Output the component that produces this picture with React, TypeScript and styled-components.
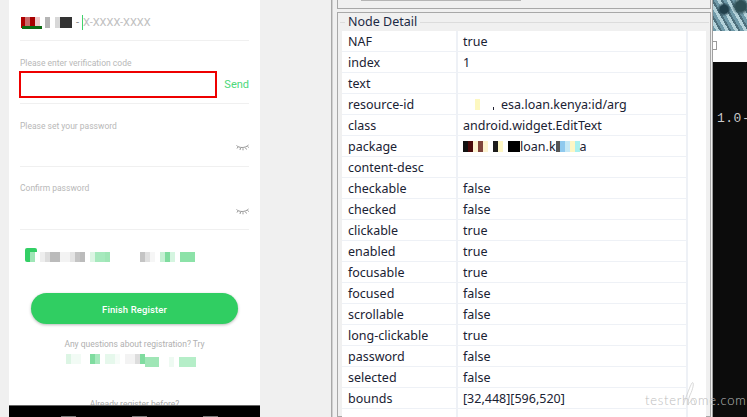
import styled, { createGlobalStyle } from "styled-components";

const GlobalStyle = createGlobalStyle`
  html, body { margin: 0; padding: 0; background: #f0f0f0; overflow: hidden; }
  * { box-sizing: border-box; }
`;

const rows: [string, string][] = [
  ["NAF", "true"],
  ["index", "1"],
  ["text", ""],
  ["resource-id", "esa.loan.kenya:id/arg"],
  ["class", "android.widget.EditText"],
  ["package", ""],
  ["content-desc", ""],
  ["checkable", "false"],
  ["checked", "false"],
  ["clickable", "true"],
  ["enabled", "true"],
  ["focusable", "true"],
  ["focused", "false"],
  ["scrollable", "false"],
  ["long-clickable", "true"],
  ["password", "false"],
  ["selected", "false"],
  ["bounds", "[32,448][596,520]"],
  ["", ""],
];

type Tile = [number, string];

const phoneTiles: Tile[] = [
  [4, "#b00000"], [5, "#c96a6a"], [5, "#a80000"], [5, "#efcaca"], [5, "#fff"], [5, "#b5b5b5"],
  [5, "#fff"], [5, "#d8d8d8"], [12, "#333"],
];
const policyTiles: Tile[] = [
  [5, "#9fe6b6"], [5, "#fff"], [5, "#eee"], [5, "#ddd"], [10, "#bbb"], [10, "#f3f3f3"], [5, "#e4e4e4"], [5, "#c4c4c4"],
  [5, "#bbb"], [5, "#fff"], [5, "#dcf5e4"], [10, "#a6e9bd"], [5, "#9fe6b6"], [30, "#fff"], [5, "#c4c4c4"], [5, "#e0e0e0"],
  [5, "#f6f6f6"], [5, "#fff"], [5, "#c5f0d4"], [5, "#7fdc9f"], [5, "#d5f5e0"], [5, "#fff"], [15, "#8ce2a8"],
];
const tryTiles: Tile[] = [
  [5, "#dcf5e4"], [5, "#f2fbf5"], [5, "#f2fbf5"], [9, "#fff"], [5, "#7fdc9f"], [5, "#a6e9bd"], [5, "#fff"], [10, "#e6f8ec"],
  [5, "#f6fcf8"], [5, "#fff"], [10, "#f3f3f3"], [5, "#ddd"], [5, "#7fdc9f"],
];
const tryTailTiles: Tile[] = [[14, "#9fe6b6"], [10, "#fff"], [5, "#eefaf2"], [5, "#fff"], [17, "#b5eec8"]];
const packageTiles: Tile[] = [
  [5, "#111"], [5, "#4a0a0a"], [5, "#fdf3d0"], [5, "#80453c"], [5, "#fdf3d0"], [5, "#fff"], [5, "#1c1c1c"], [5, "#fdf6c4"],
  [5, "#fff"], [12, "#000"],
];
const packageTailTiles: Tile[] = [[4, "#555"], [5, "#8fc9ee"], [5, "#c5e8f5"], [5, "#fdf6c4"], [5, "#a8f0ee"]];

const Page = styled.div`
  position: relative;
  display: flex;
  width: 747px;
  height: 417px;
  overflow: hidden;
  background: #f0f0f0;
`;

const Phone = styled.div`
  position: relative;
  flex: 0 0 251px;
  margin-left: 9px;
  height: 417px;
  background: #fff;
  padding: 0 11px;
  overflow: hidden;
  font-family: Roboto, "Liberation Sans", sans-serif;
  color: #bbb;
`;

const Field = styled.div<{ $h: number }>`
  display: flow-root;
  height: ${(p) => p.$h}px;
  border-bottom: 1px solid #f0f0f0;
`;

const SmallLabel = styled.div<{ $top: number }>`
  font-size: 8.5px;
  line-height: 10px;
  padding-top: ${(p) => p.$top}px;
  color: #b8b8b8;
`;

const MobileLabel = styled(SmallLabel)`
  margin-top: -8px;
`;

const MobileRow = styled.div`
  display: flex;
  align-items: center;
  height: 14px;
  margin-top: 13px;
  padding-left: 1px;
  font-size: 11px;
  color: #c0c0c0;
`;

const Mosaic = styled.div`
  display: flex;
  flex: none;
`;

const Block = styled.div<{ $w: number; $h: number; $c: string }>`
  width: ${(p) => p.$w}px;
  height: ${(p) => p.$h}px;
  background: ${(p) => p.$c};
`;

const FlagStripe = styled.div`
  position: absolute;
  left: 13px;
  top: 26px;
  width: 20px;
  height: 3px;
  background: #0b6b12;
`;

const Dash = styled.span`
  width: 7px;
  color: #888;
  text-align: right;
`;

const Caret = styled.span`
  width: 1px;
  height: 15px;
  margin: 0 0 0 3px;
  background: #3fd26c;
`;

const CodeRow = styled.div`
  display: flex;
  align-items: center;
  justify-content: space-between;
  margin: 3px 0 0 -1px;
`;

const RedBox = styled.div`
  width: 198px;
  height: 27px;
  border: 2px solid #ee0000;
`;

const Send = styled.span`
  font-size: 11px;
  color: #4cd87a;
`;

const EyeRow = styled.div<{ $top: number }>`
  display: flex;
  justify-content: flex-end;
  margin-top: ${(p) => p.$top}px;
`;

const ClosedEye = () => (
  <svg width="13" height="7" viewBox="0 0 13 7" fill="none" stroke="#8a8a8a" strokeWidth="0.9">
    <path d="M0.5 1.500C3 4 9 4.500 12.500 1" />
    <path d="M2 3L1 4.500M4.500 4L4 6M7 4.300V6.300M9.500 3.800L10.500 5.500M11.500 2.500L12.800 3.500" />
  </svg>
);

const PolicyRow = styled.div`
  position: relative;
  z-index: 1;
  display: flex;
  align-items: center;
  height: 10px;
  margin: 22px 0 0 10px;
`;

const Tick = styled.div`
  position: absolute;
  left: 16px;
  top: 248px;
  width: 12px;
  height: 14px;
  border-radius: 2px;
  background: #33cf65;
`;

const FinishButton = styled.button`
  display: block;
  width: 207px;
  height: 31px;
  margin: 31px 0 0 11px;
  padding: 2px 0 0;
  border: 0;
  border-radius: 16px;
  background: #30ce62;
  box-shadow: 0 1px 3px rgba(0, 0, 0, 0.28);
  color: #fff;
  font: 500 9.5px Roboto, "Liberation Sans", sans-serif;
  letter-spacing: 0.1px;
`;

const Help = styled.div`
  margin-top: 15px;
  text-align: center;
  font-size: 8.5px;
  line-height: 10px;
  color: #b0b0b0;
`;

const HelpMosaic = styled.div`
  display: flex;
  align-items: flex-start;
  height: 14px;
  margin: 5px 0 0 46px;
`;

const HelpTail = styled.div`
  margin-top: 3px;
`;

const Already = styled.div`
  margin-top: 31px;
  text-align: center;
  font-size: 8.5px;
  line-height: 10px;
  color: #aaa;
`;

const NavBar = styled.div`
  position: absolute;
  left: -9px;
  right: 0;
  bottom: 0;
  display: flex;
  align-items: flex-end;
  gap: 56px;
  height: 12px;
  padding-left: 61px;
  background: #000;
  border-top: 1px solid #666;
`;

const NavHint = styled.div`
  width: 15px;
  height: 1px;
  background: #777;
`;

const Desk = styled.div`
  flex: 1;
  display: flex;
  min-width: 0;
`;

const Gutter = styled.div`
  flex: 0 0 72px;
  border-right: 1px solid #a8a8a8;
`;

const Tool = styled.div`
  width: 381px;
  flex: none;
  padding: 0 1px 0 4px;
  border-left: 1px solid #d0d0d0;
  border-right: 1px solid #a0a0a0;
  font-family: "Noto Sans", "Open Sans", sans-serif;
`;

const TopBox = styled.div`
  height: 9px;
  border: 1px solid #a8a8a8;
  border-top: 0;
  padding-left: 23px;
`;

const TopLine = styled.div`
  width: 160px;
  height: 1px;
  background: #b4b4b4;
`;

const DetailBox = styled.div`
  position: relative;
  height: 405px;
  margin-top: 3px;
  border: 1px solid #a8a8a8;
  padding: 18px 4px 0 4px;
`;

const Legend = styled.div`
  position: absolute;
  left: 2px;
  top: 9px;
  width: 369px;
  height: 1px;
  background: #dcdcdc;
`;

const LegendText = styled.span`
  position: absolute;
  left: 5px;
  top: -7px;
  padding: 0 3px;
  background: #f0f0f0;
  color: #1c2a44;
  font-size: 12.5px;
  line-height: 14px;
`;

const Table = styled.div`
  background: #fff;
  height: 387px;
  overflow: hidden;
  padding-right: 18px;
`;

const Row = styled.div`
  display: grid;
  grid-template-columns: 114px 1fr;
  height: 21px;
  border-bottom: 1px solid #eef1f6;
  border-right: 2px solid #eef1f6;
`;

const Cell = styled.div`
  display: flex;
  align-items: center;
  padding-left: 6px;
  height: 20px;
  font-size: 12.5px;
  color: #1a2233;
  white-space: nowrap;
  & + & {
    border-left: 2px solid #eef1f6;
    padding-left: 5px;
  }
`;

const IdGap = styled.span`
  display: flex;
  align-items: center;
  width: 38px;
  padding-left: 12px;
`;

const IdSpeck = styled.span`
  width: 1px;
  height: 3px;
  margin: 9px 0 0 13px;
  background: #223;
`;

const Mark = styled.div`
  position: absolute;
  left: 645px;
  top: 393px;
  width: 102px;
  z-index: 2;
  font: 300 13px Lato, "Liberation Sans", sans-serif;
  letter-spacing: 0.75px;
  line-height: 15px;
  white-space: nowrap;
  color: #bdbdbd;
`;

const MarkCurve = styled.svg`
  position: absolute;
  left: 36px;
  top: -12px;
`;

const Desktop = styled.div`
  flex: 1;
  display: flex;
  flex-direction: column;
`;

const Wallpaper = styled.div`
  height: 31px;
  background:
    radial-gradient(circle at 30% 30%, #22404c 0 4px, transparent 7px),
    radial-gradient(circle at 75% 20%, #2f4f55 0 5px, transparent 9px),
    repeating-linear-gradient(60deg, #6f99a8 0 3px, #b4d2da 3px 6px, #4d6f7c 6px 8px);
`;

const WhiteStrip = styled.div`
  height: 31px;
  padding-top: 10px;
  background: #fff;
`;

const StripHandle = styled.div`
  width: 4px;
  height: 9px;
  border: 1px solid #9a9a9a;
  border-left: 0;
`;

const Console = styled.div`
  flex: 1;
  background: #0c0c0c;
  color: #c8c8c8;
  padding: 49px 0 0 4px;
  font: 13px "Liberation Mono", monospace;
  letter-spacing: 0.5px;
`;

function Tiles({ items, h }: { items: Tile[]; h: number }) {
  return (
    <Mosaic>
      {items.map(([w, c], i) => (
        <Block key={i} $w={w} $h={h} $c={c} />
      ))}
    </Mosaic>
  );
}

export default function App() {
  return (
    <Page>
      <GlobalStyle />
      <Phone>
        <Field $h={41}>
          <MobileLabel $top={0}>Mobile</MobileLabel>
          <MobileRow>
            <Tiles items={phoneTiles} h={11} />
            <Dash>-</Dash>
            <Caret />
            <span>X-XXXX-XXXX</span>
          </MobileRow>
          <FlagStripe />
        </Field>
        <Field $h={63}>
          <SmallLabel $top={17}>Please enter verification code</SmallLabel>
          <CodeRow>
            <RedBox />
            <Send>Send</Send>
          </CodeRow>
        </Field>
        <Field $h={63}>
          <SmallLabel $top={17}>Please set your password</SmallLabel>
          <EyeRow $top={13}>
            <ClosedEye />
          </EyeRow>
        </Field>
        <Field $h={63}>
          <SmallLabel $top={16}>Confirm password</SmallLabel>
          <EyeRow $top={15}>
            <ClosedEye />
          </EyeRow>
        </Field>
        <Tick />
        <PolicyRow>
          <Tiles items={policyTiles} h={10} />
        </PolicyRow>
        <FinishButton>Finish Register</FinishButton>
        <Help>Any questions about registration? Try</Help>
        <HelpMosaic>
          <Tiles items={tryTiles} h={10} />
          <HelpTail>
            <Tiles items={tryTailTiles} h={10} />
          </HelpTail>
        </HelpMosaic>
        <Already>Already register before?</Already>
        <NavBar>
          <NavHint />
          <NavHint />
          <NavHint />
        </NavBar>
      </Phone>
      <Desk>
        <Gutter />
        <Tool>
          <TopBox>
            <TopLine />
          </TopBox>
          <DetailBox>
            <Legend>
              <LegendText>Node Detail</LegendText>
            </Legend>
            <Table>
              {rows.map(([k, v]) => (
                <Row key={k || "blank"}>
                  <Cell>{k}</Cell>
                  <Cell>
                    {k === "resource-id" && (
                      <IdGap>
                        <Block $w={5} $h={11} $c="#fdf8c0" />
                        <IdSpeck />
                      </IdGap>
                    )}
                    {k === "package" ? (
                      <>
                        <Tiles items={packageTiles} h={11} />
                        loan.k
                        <Tiles items={packageTailTiles} h={11} />a
                      </>
                    ) : (
                      v
                    )}
                  </Cell>
                </Row>
              ))}
            </Table>
          </DetailBox>
        </Tool>
        <Desktop>
          <Wallpaper />
          <WhiteStrip>
            <StripHandle />
          </WhiteStrip>
          <Console>1.0-</Console>
        </Desktop>
      </Desk>
      <Mark>
        testerhome.com
        <MarkCurve width="24" height="26" viewBox="0 0 24 26" fill="none" stroke="#cfcfcf" strokeWidth="0.8">
          <path d="M2 24C6 14 9 5 11 2C13 0 13 6 9 14C7 19 7 22 7 24C9 20 12 18 13 19C14 20 13 23 15 24" />
        </MarkCurve>
      </Mark>
    </Page>
  );
}
